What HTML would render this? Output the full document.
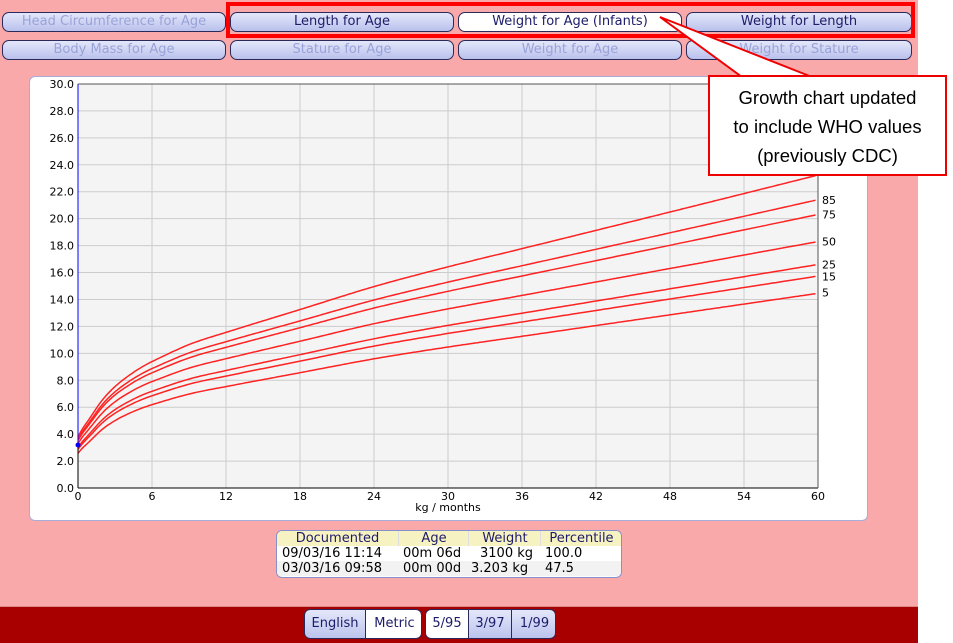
<!DOCTYPE html>
<html><head><meta charset="utf-8"><style>
body{margin:0;width:953px;height:642px;position:relative;overflow:hidden;background:#fff;font-family:"DejaVu Sans","Liberation Sans",sans-serif}
#bg{position:absolute;left:0;top:0;width:918px;height:607px;background:#f9a9a9}
#bar{position:absolute;left:0;top:606px;width:918px;height:36px;background:#a80000;border-top:1px solid #d88}
.b{position:absolute;height:18px;border:1px solid #2a2a5a;border-radius:7px;background:linear-gradient(#e4e7fa,#b9c1ec);font-size:13px;line-height:18px;text-align:center;color:#9aa3d8;box-sizing:content-box}
.on{color:#1c1c6a}.sel{background:#fff;color:#1c1c6a}
#redbox{position:absolute;left:226px;top:2px;width:681px;height:28px;border:4px solid #f00}
#panel{position:absolute;left:29px;top:76px;width:837px;height:443px;background:#fff;border:1px solid #a7acd8;border-radius:6px}
#call{position:absolute;left:708px;top:75px;width:239px;height:101px;background:#fff;border:2px solid #e00;font-family:"Liberation Sans",sans-serif;font-size:18.5px;text-align:center;line-height:29px;padding-top:6px;box-sizing:border-box;color:#000}
#tb{position:absolute;left:276px;top:530px;width:344px;height:46px;background:#fff;border:1px solid #8890cc;border-radius:6px;overflow:hidden;font-size:13px}
#tb div{position:absolute;height:15px;line-height:15px;white-space:nowrap}
.r{position:absolute;left:0;width:344px;height:15px}
</style></head><body>
<div id="bg"></div>
<div class="b" style="left:2px;top:12px;width:222px">Head Circumference for Age</div>
<div class="b on" style="left:230px;top:12px;width:222px">Length for Age</div>
<div class="b sel" style="left:458px;top:12px;width:222px">Weight for Age (Infants)</div>
<div class="b on" style="left:686px;top:12px;width:224px">Weight for Length</div>
<div class="b" style="left:2px;top:40px;width:222px">Body Mass for Age</div>
<div class="b" style="left:230px;top:40px;width:222px">Stature for Age</div>
<div class="b" style="left:458px;top:40px;width:222px">Weight for Age</div>
<div class="b" style="left:686px;top:40px;width:224px">Weight for Stature</div>
<div id="redbox"></div>
<div id="panel"></div>
<svg id="ch" style="position:absolute;left:0;top:0" width="953" height="642" font-family="DejaVu Sans,sans-serif" font-size="11"></svg>
<svg style="position:absolute;left:0;top:0" width="953" height="642"><polygon points="660,17 742,77 812,77" fill="#fff" stroke="#e00" stroke-width="2"/></svg>
<div id="call">Growth chart updated<br>to include WHO values<br>(previously CDC)</div>
<div id="tb">
<div class="r" style="top:0;background:#f7f2c1"></div>
<div class="r" style="top:30px;background:#f2f2f2"></div>
<div style="top:0;left:0;width:121px;text-align:center;color:#1c1c6a">Documented</div>
<div style="top:0;left:121px;width:70px;text-align:center;color:#1c1c6a;border-left:1px solid #ddd">Age</div>
<div style="top:0;left:191px;width:72px;text-align:center;color:#1c1c6a;border-left:1px solid #ddd">Weight</div>
<div style="top:0;left:263px;width:81px;text-align:center;color:#1c1c6a;border-left:1px solid #ddd">Percentile</div>
<div style="top:15px;left:5px">09/03/16 11:14</div><div style="top:15px;left:126px">00m 06d</div><div style="top:15px;left:203px">3100 kg</div><div style="top:15px;left:268px">100.0</div>
<div style="top:30px;left:5px">03/03/16 09:58</div><div style="top:30px;left:126px">00m 00d</div><div style="top:30px;left:194px">3.203 kg</div><div style="top:30px;left:268px">47.5</div>
</div>
<div id="bar"></div>
<div style="position:absolute;top:609px;left:304px;width:118px;height:30px;border:1px solid #2a2a5a;border-radius:6px;overflow:hidden;box-sizing:border-box;font-size:13px;line-height:28px;color:#1c1c6a">
<div style="position:absolute;left:0;width:60px;height:30px;text-align:center;background:linear-gradient(#e4e7fa,#b9c1ec);border-right:1px solid #2a2a5a">English</div>
<div style="position:absolute;left:61px;width:57px;height:30px;text-align:center;background:#fff">Metric</div></div>
<div style="position:absolute;top:609px;left:425px;width:131px;height:30px;border:1px solid #2a2a5a;border-radius:6px;overflow:hidden;box-sizing:border-box;font-size:13px;line-height:28px;color:#1c1c6a">
<div style="position:absolute;left:0;width:42px;height:30px;text-align:center;background:#fff;border-right:1px solid #2a2a5a">5/95</div>
<div style="position:absolute;left:43px;width:42px;height:30px;text-align:center;background:linear-gradient(#e4e7fa,#b9c1ec);border-right:1px solid #2a2a5a">3/97</div>
<div style="position:absolute;left:86px;width:45px;height:30px;text-align:center;background:linear-gradient(#e4e7fa,#b9c1ec)">1/99</div></div>
<script>
var s='',X=function(t){return 78+t*740/60},Y=function(v){return 488-v*404/30};
s+='<rect x="78" y="84" width="740" height="404" fill="#f4f4f4"/>';
for(var t=6;t<60;t+=6)s+='<line x1="'+X(t)+'" y1="84" x2="'+X(t)+'" y2="488" stroke="#ccc"/>';
for(var v=2;v<30;v+=2)s+='<line x1="78" y1="'+Y(v)+'" x2="818" y2="'+Y(v)+'" stroke="#ccc"/>';
for(var v=0;v<=30;v+=2)s+='<text x="74" y="'+(Y(v)+4)+'" text-anchor="end">'+v.toFixed(1)+'</text>';
for(var t=0;t<=60;t+=6)s+='<text x="'+X(t)+'" y="500" text-anchor="middle">'+t+'</text>';
s+='<text x="448" y="511" text-anchor="middle">kg / months</text>';
var P=[[0,3.3],[1,4.5],[2,5.6],[3,6.4],[4,7.0],[5,7.5],[6,7.9],[9,8.9],[12,9.6],[18,10.9],[24,12.2],[30,13.3],[36,14.3],[42,15.3],[48,16.3],[54,17.3],[60,18.3]];
function val(t){var i=0;while(i<P.length-2&&P[i+1][0]<t)i++;
 var p0=P[Math.max(0,i-1)],p1=P[i],p2=P[i+1],p3=P[Math.min(P.length-1,i+2)];
 var h=p2[0]-p1[0],u=(t-p1[0])/h;
 var m1=(p2[1]-p0[1])/(p2[0]-p0[0]||1)*h,m2=(p3[1]-p1[1])/(p3[0]-p1[0]||1)*h;
 if(i==0)m1=(p2[1]-p1[1])*1.3;
 var u2=u*u,u3=u2*u;
 return (2*u3-3*u2+1)*p1[1]+(u3-2*u2+u)*m1+(-2*u3+3*u2)*p2[1]+(u3-u2)*m2;}
var F=[[1.15,1.27],[1.1,1.17],[1.07,1.11],[1,1],[.91,.907],[.87,.86],[.78,.79]];
F.forEach(function(f){var d='';for(var t=0;t<=60;t+=0.2){var m=val(t);var k=f[0]+(f[1]-f[0])*Math.sqrt(t/60);d+=(t?'L':'M')+X(t).toFixed(1)+','+Y(m*k).toFixed(1);}s+='<path d="'+d+'" fill="none" stroke="#f22" stroke-width="1.5"/>';});
s+='<line x1="78" y1="84" x2="78" y2="445" stroke="#00f"/><line x1="78" y1="445" x2="78" y2="488" stroke="#000"/><line x1="78" y1="488" x2="818" y2="488" stroke="#000"/><line x1="818" y1="84" x2="818" y2="488" stroke="#555"/><line x1="78" y1="84" x2="818" y2="84" stroke="#555"/><circle cx="78" cy="445" r="2.5" fill="#00f"/>';
[[85,21.4],[75,20.3],[50,18.3],[25,16.6],[15,15.7],[5,14.5]].forEach(function(p){s+='<text x="822" y="'+(Y(p[1])+4)+'">'+p[0]+'</text>'});
document.getElementById('ch').innerHTML=s;
</script>
</body></html>
